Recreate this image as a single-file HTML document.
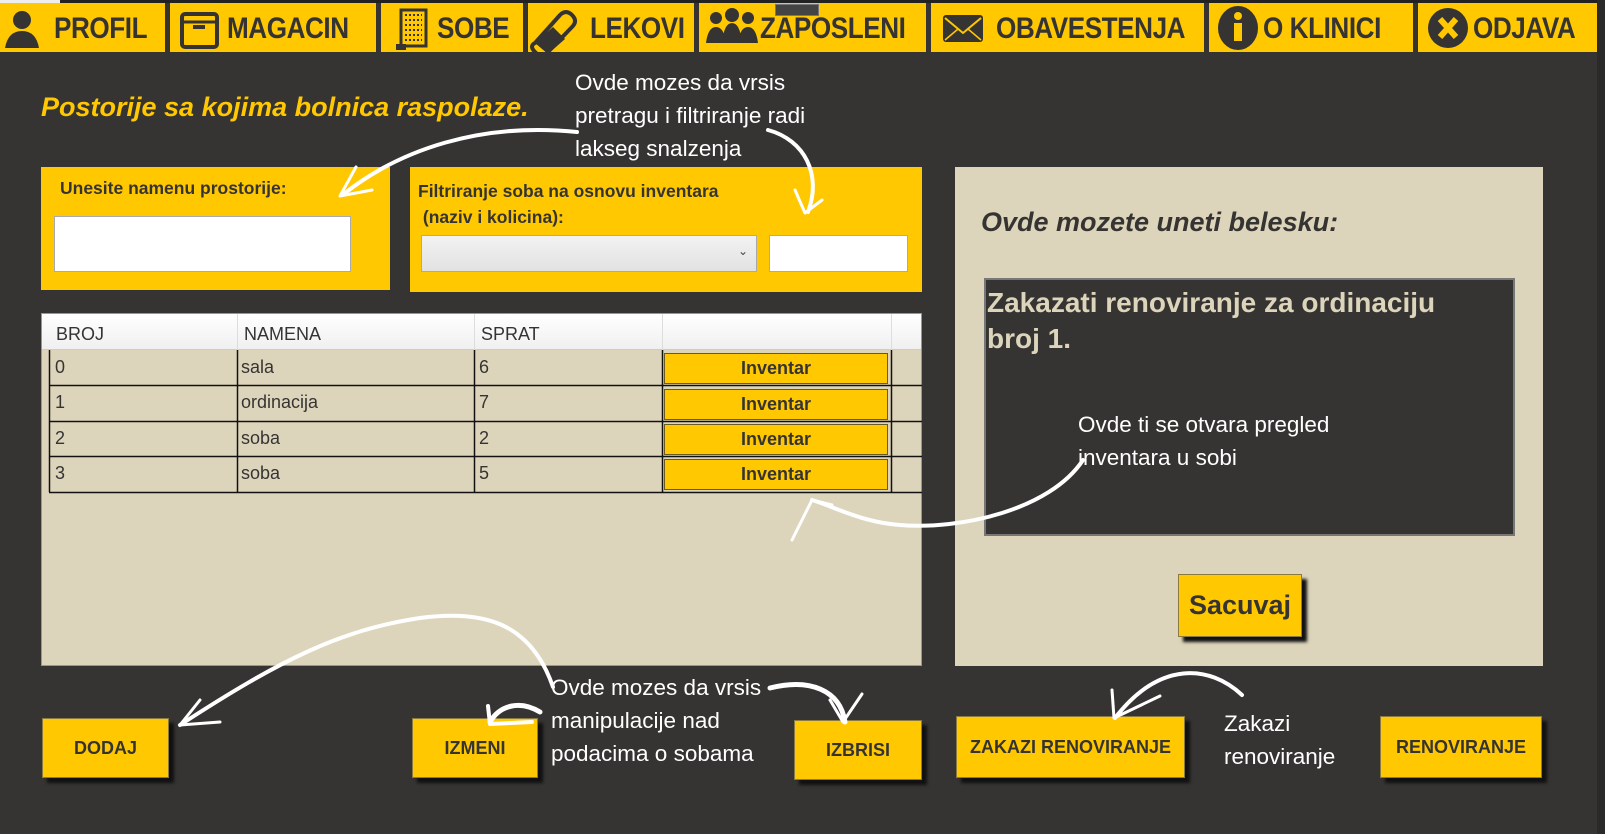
<!DOCTYPE html>
<html><head><meta charset="utf-8"><style>
*{margin:0;padding:0;box-sizing:border-box}
body{width:1605px;height:834px;background:#363433;position:relative;overflow:hidden;font-family:"Liberation Sans",sans-serif}
.a{position:absolute}
.nav{position:absolute;left:0;top:3px;width:1597px;height:49px;background:#ffc800}
.sep{position:absolute;top:3px;width:5px;height:49px;background:#363433}
.nt{position:absolute;top:12px;font-weight:bold;font-size:30px;color:#363433;transform:scaleX(.87);transform-origin:left top;letter-spacing:-0.5px}
.ann{position:absolute;color:#fff;font-size:22.5px;line-height:33px}
.btn{position:absolute;background:#ffc800;border:1px solid #8a7a40;box-shadow:5px 5px 3px #111;color:#363433;font-weight:bold;font-size:18px;display:flex;align-items:center;justify-content:center}
.cell{position:absolute;font-size:18px;color:#363433}
.inv{position:absolute;left:664px;width:224px;height:31px;background:#ffc800;border:1px solid #6b5a20;font-weight:bold;font-size:18px;color:#363433;display:flex;align-items:center;justify-content:center}
</style></head><body>
<div class="a" style="left:0;top:0;width:1605px;height:3px;background:#222"></div>
<div class="a" style="left:0;top:0;width:60px;height:3px;background:#eee"></div>
<div class="nav"></div>
<div class="a" style="left:1597px;top:0;width:8px;height:834px;background:#2a2a2a"></div>
<div class="sep" style="left:165px"></div><div class="sep" style="left:376px"></div><div class="sep" style="left:523px"></div><div class="sep" style="left:694px"></div><div class="sep" style="left:926px"></div><div class="sep" style="left:1204px"></div><div class="sep" style="left:1413px"></div>
<svg class="a" style="left:0;top:3px" width="1600" height="49">
<g fill="#363433">
<circle cx="22" cy="17" r="9"/><path d="M5 45 Q8 28 22 28 Q36 28 39 45Z"/>
<rect x="182" y="11" width="35" height="33" rx="3" fill="none" stroke="#363433" stroke-width="4"/><path d="M182 19h35" stroke="#363433" stroke-width="3"/><rect x="193" y="22" width="12" height="4"/>
<rect x="401" y="7" width="25" height="36" fill="none" stroke="#363433" stroke-width="3"/><path d="M405 12h17M405 17h17M405 22h17M405 27h17M405 32h17M405 37h17" stroke="#363433" stroke-width="2" stroke-dasharray="2 2"/><rect x="396" y="41" width="10" height="6"/>
<path d="M535 40 L560 12 Q566 6 572 12 Q578 18 572 24 L547 50 Q541 55 535 49 Q529 43 535 40Z" fill="none" stroke="#363433" stroke-width="4"/><path d="M535 40 L553 24 L565 36 L548 51Z"/>
<circle cx="716" cy="15" r="6"/><circle cx="732" cy="12" r="7"/><circle cx="748" cy="15" r="6"/><path d="M706 40 Q708 24 716 24 Q724 24 726 40Z M722 40 Q724 20 732 20 Q740 20 742 40Z M738 40 Q740 24 748 24 Q756 24 758 40Z"/>
<rect x="943" y="12" width="40" height="27" rx="3"/><path d="M945 15 L963 30 L981 15" stroke="#ffc800" stroke-width="2" fill="none"/><path d="M945 37 L958 26 M981 37 L968 26" stroke="#ffc800" stroke-width="1.5"/>
<ellipse cx="1238" cy="25" rx="20" ry="22"/><rect x="1234" y="20" width="8" height="18" fill="#ffc800"/><circle cx="1238" cy="13" r="4" fill="#ffc800"/>
<circle cx="1448" cy="25" r="20"/><path d="M1440 16 L1456 34 M1456 16 L1440 34" stroke="#ffc800" stroke-width="6"/>
</g></svg>
<div class="nt" style="left:54px">PROFIL</div>
<div class="nt" style="left:227px">MAGACIN</div>
<div class="nt" style="left:437px">SOBE</div>
<div class="nt" style="left:590px">LEKOVI</div>
<div class="nt" style="left:760px">ZAPOSLENI</div>
<div class="nt" style="left:996px">OBAVESTENJA</div>
<div class="nt" style="left:1263px">O KLINICI</div>
<div class="nt" style="left:1473px">ODJAVA</div>
<div class="a" style="left:775px;top:4px;width:44px;height:12px;background:#444;border:1px solid #777"></div>

<div class="a" style="left:41px;top:92px;color:#ffc800;font-size:27px;font-weight:bold;font-style:italic">Postorije sa kojima bolnica raspolaze.</div>
<div class="ann" style="left:575px;top:66px">Ovde mozes da vrsis<br>pretragu i filtriranje radi<br>lakseg snalzenja</div>

<div class="a" style="left:41px;top:167px;width:349px;height:123px;background:#ffc800"></div>
<div class="a" style="left:60px;top:178px;font-size:17.5px;font-weight:bold;color:#363433">Unesite namenu prostorije:</div>
<div class="a" style="left:54px;top:216px;width:297px;height:56px;background:#fff;border:1px solid #aaa"></div>
<div class="a" style="left:410px;top:167px;width:512px;height:125px;background:#ffc800"></div>
<div class="a" style="left:418px;top:178px;font-size:17.5px;font-weight:bold;color:#363433;line-height:26px">Filtriranje soba na osnovu inventara<br>&nbsp;(naziv i kolicina):</div>
<div class="a" style="left:421px;top:235px;width:336px;height:37px;background:linear-gradient(#f2f2f2,#e2e2e2);border:1px solid #aaa;font-size:12px;color:#444;text-align:right;padding:8px 8px 0 0">&#8964;</div>
<div class="a" style="left:769px;top:235px;width:139px;height:37px;background:#fff;border:1px solid #aaa"></div>

<div class="a" style="left:41px;top:313px;width:881px;height:353px;background:#ddd5bb;border:1px solid #7a9cc0"></div>
<div class="a" style="left:42px;top:314px;width:879px;height:36px;background:linear-gradient(#fff,#f0f0f0);border-bottom:1px solid #ccc"></div>
<svg class="a" style="left:0;top:0" width="1605" height="834">
<g stroke="#ddd" stroke-width="1"><path d="M237.5 314V350M474.5 314V350M662.5 314V350M891.5 314V350"/></g>
<g stroke="#111" stroke-width="1.5"><path d="M49 385.5H922M49 421.5H922M49 456.5H922M49 492.5H922"/><path d="M237.5 350V492M474.5 350V492M662.5 350V492M891.5 350V492M49.5 350V492"/></g>
</svg>
<div class="cell" style="left:56px;top:324px">BROJ</div><div class="cell" style="left:244px;top:324px">NAMENA</div><div class="cell" style="left:481px;top:324px">SPRAT</div>
<div class="cell" style="left:55px;top:357px">0</div><div class="cell" style="left:241px;top:357px">sala</div><div class="cell" style="left:479px;top:357px">6</div>
<div class="cell" style="left:55px;top:392px">1</div><div class="cell" style="left:241px;top:392px">ordinacija</div><div class="cell" style="left:479px;top:392px">7</div>
<div class="cell" style="left:55px;top:428px">2</div><div class="cell" style="left:241px;top:428px">soba</div><div class="cell" style="left:479px;top:428px">2</div>
<div class="cell" style="left:55px;top:463px">3</div><div class="cell" style="left:241px;top:463px">soba</div><div class="cell" style="left:479px;top:463px">5</div>
<div class="inv" style="top:353px">Inventar</div><div class="inv" style="top:389px">Inventar</div><div class="inv" style="top:424px">Inventar</div><div class="inv" style="top:459px">Inventar</div>

<div class="a" style="left:955px;top:167px;width:588px;height:499px;background:#ddd5bb"></div>
<div class="a" style="left:981px;top:207px;font-size:27px;font-weight:bold;font-style:italic;color:#363433">Ovde mozete uneti belesku:</div>
<div class="a" style="left:984px;top:278px;width:531px;height:258px;background:#363433;border:2px solid #777"></div>
<div class="a" style="left:987px;top:285px;width:480px;font-size:28px;font-weight:bold;color:#ddd5bb;line-height:36px">Zakazati renoviranje za ordinaciju broj 1.</div>
<div class="ann" style="left:1078px;top:408px">Ovde ti se otvara pregled<br>inventara u sobi</div>
<div class="btn" style="left:1178px;top:574px;width:124px;height:63px;font-size:27px">Sacuvaj</div>

<div class="btn" style="left:42px;top:718px;width:127px;height:60px">DODAJ</div>
<div class="btn" style="left:412px;top:718px;width:126px;height:60px">IZMENI</div>
<div class="btn" style="left:794px;top:720px;width:128px;height:60px">IZBRISI</div>
<div class="btn" style="left:956px;top:716px;width:229px;height:62px">ZAKAZI RENOVIRANJE</div>
<div class="btn" style="left:1380px;top:716px;width:162px;height:62px">RENOVIRANJE</div>
<div class="ann" style="left:551px;top:671px">Ovde mozes da vrsis<br>manipulacije nad<br>podacima o sobama</div>
<div class="ann" style="left:1224px;top:707px">Zakazi<br>renoviranje</div>

<svg class="a" style="left:0;top:0" width="1605" height="834" fill="none" stroke="#fff" stroke-linecap="round" stroke-linejoin="round">
<path d="M577 132 C480 122 400 150 345 193" stroke-width="4"/><path d="M356 167 L340 196 L372 190" stroke-width="3"/>
<path d="M768 130 C805 140 822 175 808 212" stroke-width="4"/><path d="M795 190 L805 213 L822 200" stroke-width="3"/>
<path d="M1083 460 C1050 510 960 530 900 525 C860 522 830 505 812 500" stroke-width="4"/><path d="M832 505 L812 500 L792 540" stroke-width="3"/>
<path d="M553 687 C530 620 480 610 420 618 C340 630 280 660 180 725" stroke-width="4"/><path d="M200 700 L180 725 L220 722" stroke-width="3"/>
<path d="M540 712 C520 700 500 705 490 722" stroke-width="5"/><path d="M488 706 L490 724 L532 722" stroke-width="4"/>
<path d="M770 688 C810 678 840 690 845 722" stroke-width="5"/><path d="M830 700 L843 722 L862 694" stroke-width="3"/>
<path d="M1242 695 C1210 665 1160 660 1115 718" stroke-width="4"/><path d="M1112 690 L1114 718 L1160 696" stroke-width="3"/>
</svg>
</body></html>
